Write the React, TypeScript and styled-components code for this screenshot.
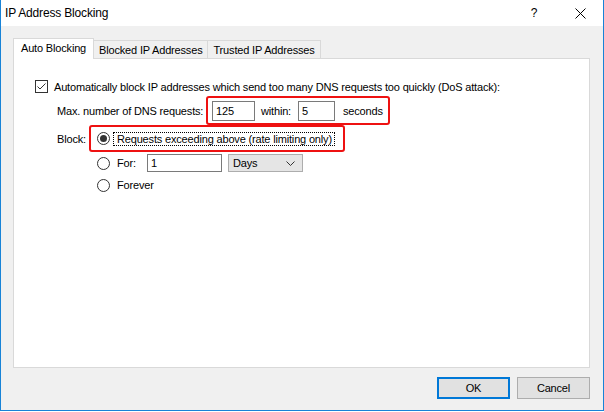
import React from 'react';
import styled, { createGlobalStyle } from 'styled-components';

const Global = createGlobalStyle`
  html, body { margin: 0; padding: 0; background: #ffffff; }
  body {
    font-family: "Liberation Sans", Arial, sans-serif;
    font-size: 11px;
    letter-spacing: -0.17px;
    color: #000;
  }
  * { box-sizing: border-box; }
`;

const Window = styled.div`
  width: 604px;
  height: 411px;
  border: 1px solid #1883d7;
  border-top: none;
  background: #f0f0f0;
  display: flex;
  flex-direction: column;
`;

const TitleBar = styled.div`
  height: 26px;
  background: #ffffff;
  display: flex;
  align-items: center;
  padding-left: 4px;
  font-size: 12px;
`;

const Title = styled.div`
  flex: 1;
`;

const CaptionButton = styled.div`
  width: 46px;
  height: 26px;
  display: flex;
  align-items: center;
  justify-content: center;
  font-size: 12px;
`;

const TabStrip = styled.div`
  display: flex;
  align-items: flex-end;
  margin-top: 12px;
  padding-left: 12px;
  height: 20px;
`;

const Tab = styled.div<{ $active?: boolean }>`
  height: ${(p) => (p.$active ? '21px' : '18px')};
  margin-bottom: ${(p) => (p.$active ? '-1px' : '0')};
  position: relative;
  z-index: ${(p) => (p.$active ? 1 : 0)};
  background: ${(p) => (p.$active ? '#ffffff' : '#f0f0f0')};
  border: 1px solid #d9d9d9;
  border-bottom: none;
  margin-left: ${(p) => (p.$active ? '0' : '-1px')};
  padding: ${(p) => (p.$active ? '0 7px 2px 7px' : '0 5px')};
  display: flex;
  align-items: center;
  white-space: nowrap;
`;

const Panel = styled.div`
  margin: 0 13px 0 12px;
  height: 310px;
  background: #ffffff;
  border: 1px solid #d9d9d9;
  display: flex;
  flex-direction: column;
  padding-left: 20px;
`;

const Row = styled.div<{ $top: number; $indent: number; $h?: number }>`
  display: flex;
  align-items: center;
  margin-top: ${(p) => p.$top}px;
  padding-left: ${(p) => p.$indent}px;
  height: ${(p) => (p.$h ? `${p.$h}px` : 'auto')};
  white-space: nowrap;
`;

const Label = styled.span<{ $w?: number; $gap?: number }>`
  display: inline-block;
  flex: none;
  width: ${(p) => (p.$w ? `${p.$w}px` : 'auto')};
  margin-left: ${(p) => p.$gap ?? 0}px;
  line-height: 14px;
`;

const Highlight = styled.div<{ $pad: string; $h?: number }>`
  display: flex;
  align-items: center;
  height: ${(p) => (p.$h ? `${p.$h}px` : 'auto')};
  border: 2px solid #ee1111;
  border-radius: 3px;
  padding: ${(p) => p.$pad};
`;

const TextBox = styled.div<{ $w: number; $h: number; $gap?: number }>`
  width: ${(p) => p.$w}px;
  height: ${(p) => p.$h}px;
  margin-left: ${(p) => p.$gap ?? 0}px;
  border: 1px solid #7a7a7a;
  background: #fff;
  padding-left: 3px;
  display: flex;
  align-items: center;
  flex: none;
`;

const Combo = styled.div<{ $w: number; $gap: number }>`
  width: ${(p) => p.$w}px;
  height: 18px;
  margin-left: ${(p) => p.$gap}px;
  border: 1px solid #adadad;
  background: #e5e5e5;
  padding: 0 7px 0 4px;
  display: flex;
  align-items: center;
  justify-content: space-between;
`;

const Focus = styled.span`
  margin-left: 3px;
  border: 1px dotted #000;
  padding: 0 2px 0 3px;
  height: 14px;
  line-height: 12px;
  display: inline-flex;
  align-items: center;
`;

const Footer = styled.div`
  display: flex;
  justify-content: flex-end;
  gap: 7px;
  padding: 9px 13px 0 0;
`;

const Button = styled.div<{ $default?: boolean }>`
  width: 73px;
  height: 22px;
  background: #e1e1e1;
  border: ${(p) => (p.$default ? '2px solid #0078d7' : '1px solid #adadad')};
  display: flex;
  align-items: center;
  justify-content: center;
`;

const Checkbox = () => (
  <svg width="13" height="13" viewBox="0 0 13 13" style={{ flex: 'none' }}>
    <rect x="0.5" y="0.5" width="12" height="12" fill="#fff" stroke="#333" />
    <path d="M2.5 6.5 L5 9 L10.5 3.5" fill="none" stroke="#333" strokeWidth="1" />
  </svg>
);

const Radio = ({ checked }: { checked?: boolean }) => (
  <svg width="13" height="13" viewBox="0 0 13 13" style={{ flex: 'none' }}>
    <circle cx="6.5" cy="6.5" r="6" fill="#fff" stroke="#333" />
    {checked && <circle cx="6.5" cy="6.5" r="3.5" fill="#333" />}
  </svg>
);

const Chevron = () => (
  <svg width="9" height="5" viewBox="0 0 9 5">
    <path d="M0.5 0.5 L4.5 4.5 L8.5 0.5" fill="none" stroke="#333" strokeWidth="1" />
  </svg>
);

const CloseIcon = () => (
  <svg width="11" height="11" viewBox="0 0 11 11">
    <path d="M0.5 0.5 L10.5 10.5 M10.5 0.5 L0.5 10.5" stroke="#000" strokeWidth="1" />
  </svg>
);

export default function App() {
  return (
    <>
      <Global />
      <Window>
        <TitleBar>
          <Title>IP Address Blocking</Title>
          <CaptionButton>?</CaptionButton>
          <CaptionButton>
            <CloseIcon />
          </CaptionButton>
        </TitleBar>
        <TabStrip>
          <Tab $active>Auto Blocking</Tab>
          <Tab>Blocked IP Addresses</Tab>
          <Tab>Trusted IP Addresses</Tab>
        </TabStrip>
        <Panel>
          <Row $top={21} $indent={1} $h={13}>
            <Checkbox />
            <Label $gap={6}>
              Automatically block IP addresses which send too many DNS requests too quickly (DoS attack):
            </Label>
          </Row>
          <Row $top={3} $indent={23}>
            <Label $w={149}>Max. number of DNS requests:</Label>
            <Highlight $pad="3px 5px 2px 4px">
              <TextBox $w={43} $h={20}>125</TextBox>
              <Label $w={37} $gap={6}>within:</Label>
              <TextBox $w={37} $h={20}>5</TextBox>
              <Label $gap={8}>seconds</Label>
            </Highlight>
          </Row>
          <Row $top={0} $indent={23}>
            <Label $w={32}>Block:</Label>
            <Highlight $pad="0 8px 0 6px" $h={27}>
              <Radio checked />
              <Focus>Requests exceeding above (rate limiting only)</Focus>
            </Highlight>
          </Row>
          <Row $top={2} $indent={63} $h={18}>
            <Radio />
            <Label $w={30} $gap={7}>For:</Label>
            <TextBox $w={75} $h={18}>1</TextBox>
            <Combo $w={75} $gap={6}>
              <span>Days</span>
              <Chevron />
            </Combo>
          </Row>
          <Row $top={6} $indent={63} $h={14}>
            <Radio />
            <Label $gap={7}>Forever</Label>
          </Row>
        </Panel>
        <Footer>
          <Button $default>OK</Button>
          <Button>Cancel</Button>
        </Footer>
      </Window>
    </>
  );
}
